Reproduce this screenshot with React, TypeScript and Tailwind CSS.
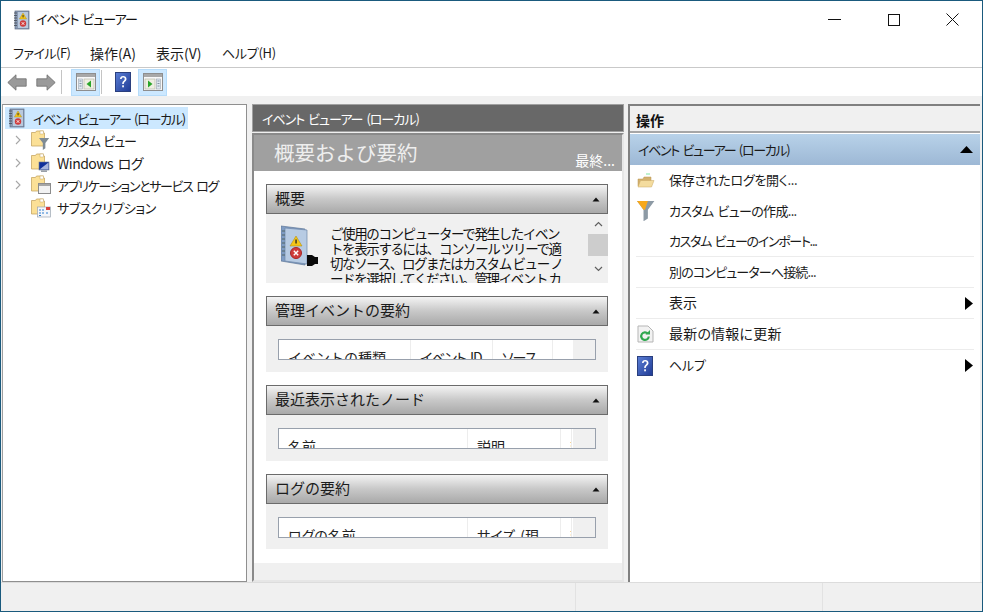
import type { ReactNode } from "react"

function LogBook({ size = 18 }: { size?: number }) {
  return (
    <svg width={size} height={size + 2} viewBox="0 0 18 20" className="shrink-0">
      <rect x="2" y="1" width="14" height="18" fill="#8a9bb5" stroke="#5c6a80" strokeWidth="0.7" />
      <rect x="5" y="2" width="10" height="16" fill="#b9c9dd" />
      <path d="M1 3h3M1 5.5h3M1 8h3M1 10.5h3M1 13h3M1 15.5h3" stroke="#4e5560" strokeWidth="0.9" />
      <path d="M10 3l3.6 6h-7.2z" fill="#f5c518" stroke="#a8860f" strokeWidth="0.4" />
      <rect x="9.6" y="5" width="0.9" height="2.4" fill="#222" />
      <circle cx="10" cy="13.5" r="3.2" fill="#cf3b3b" />
      <path d="M8.7 12.2l2.6 2.6M11.3 12.2l-2.6 2.6" stroke="#fff" strokeWidth="0.9" />
    </svg>
  )
}

function HelpBox({ id }: { id: string }) {
  return (
    <svg width="16" height="20" viewBox="0 0 16 20" className="shrink-0">
      <defs>
        <linearGradient id={id} x1="0" y1="0" x2="1" y2="1">
          <stop offset="0" stopColor="#5b7fd6" />
          <stop offset="1" stopColor="#1f3a94" />
        </linearGradient>
      </defs>
      <rect x="0.5" y="0.5" width="15" height="19" fill={`url(#${id})`} stroke="#2a3f7e" />
      <path d="M5 7c0-2 1.3-3 3.2-3S11.500 5 11.500 7c0 2.400-2.700 2.500-2.700 5H7.200c0-3.200 2.500-3.200 2.500-5 0-.9-.6-1.400-1.500-1.400S6.700 6.100 6.700 7z" fill="#fff" />
      <rect x="7.2" y="13.3" width="1.7" height="2" fill="#fff" />
    </svg>
  )
}

function PaneIcon({ side }: { side: "left" | "right" }) {
  return (
    <svg width="20" height="18" viewBox="0 0 20 18">
      <rect x="0.5" y="0.5" width="19" height="17" fill="#f8f8f8" stroke="#8e8e8e" />
      <rect x="1" y="1" width="18" height="3" fill="#a8a8a8" />
      {side === "left" ? (
        <>
          <rect x="2.5" y="6" width="4" height="10" fill="#dfe7ef" stroke="#9aa4ae" strokeWidth="0.6" />
          <path d="M3.500 8h2M3.500 10.500h2M3.500 13h2" stroke="#6a7d90" strokeWidth="0.8" />
          <rect x="8" y="6" width="10" height="10" fill="#eeeee2" stroke="#b0b0a0" strokeWidth="0.6" />
          <path d="M15 7.500v7L10.500 11z" fill="#2aa52a" />
        </>
      ) : (
        <>
          <rect x="2" y="6" width="10" height="10" fill="#eeeee2" stroke="#b0b0a0" strokeWidth="0.6" />
          <path d="M5 7.500v7L9.500 11z" fill="#2aa52a" />
          <rect x="13.5" y="6" width="4" height="10" fill="#dfe7ef" stroke="#9aa4ae" strokeWidth="0.6" />
          <path d="M14.500 8h2M14.500 10.500h2M14.500 13h2" stroke="#6a7d90" strokeWidth="0.8" />
        </>
      )}
    </svg>
  )
}

function Arrow({ flip }: { flip?: boolean }) {
  return (
    <svg width="20" height="17" viewBox="0 0 20 17" className={flip ? "-scale-x-100" : ""}>
      <path d="M0.800 8.500L9 0.800V4.800H19.200V12.200H9V16.200z" fill="#9a9a9a" stroke="#6f6f6f" strokeWidth="0.8" />
    </svg>
  )
}

function FilterShape({ orange = false }: { orange?: boolean }) {
  return (
    <>
      <path d="M0 0h12L7.500 6v6L4.500 14V6z" fill={orange ? "#8d9aa5" : "#7f8b94"} />
      {orange && <path d="M0 0h7.500L5.500 6H4.500z" fill="#f7a81b" />}
    </>
  )
}

function Folder({ children }: { children?: ReactNode }) {
  return (
    <svg width="20" height="20" viewBox="0 0 20 20" className="shrink-0">
      <path d="M0.500 2.500h4l1-1.500h7v2h1v13h-13z" fill="#fbe096" stroke="#c7a765" strokeWidth="0.8" />
      <rect x="9" y="1" width="3.500" height="3" fill="#fff" stroke="#c7a765" strokeWidth="0.5" />
      {children}
    </svg>
  )
}

function TreeRow({ label, labelClass, chevron, icon }: { label: string; labelClass: string; chevron?: boolean; icon: ReactNode }) {
  return (
    <div className="flex h-[22.5px] items-center">
      <div className="flex w-[26px] shrink-0 justify-center pr-[1px] text-[#a6a6a6]">
        {chevron && (
          <svg width="6" height="10" viewBox="0 0 6 10">
            <path d="M1 1l4 4-4 4" fill="none" stroke="currentColor" strokeWidth="1.1" />
          </svg>
        )}
      </div>
      {icon}
      <span className={`ml-[6px] whitespace-nowrap ${labelClass}`}>{label}</span>
    </div>
  )
}

function Section({ title, bodyHeight, children }: { title: string; bodyHeight: number; children: ReactNode }) {
  return (
    <section className="mb-[13px]">
      <div className="flex h-[30px] items-center justify-between border border-[#6b6b6b] bg-gradient-to-b from-[#f4f4f4] via-[#c8c8c8] to-[#a9a9a9] pl-[8px] pr-[5px] text-[15px] text-[#1c1c1c] [font-feature-settings:normal]">
        <span className="pb-[3px]">{title}</span>
        <svg width="8" height="5" viewBox="0 0 8 5" className="mr-[2px]">
          <path d="M4 0.500L7.500 4.500H0.500z" fill="#111" />
        </svg>
      </div>
      <div className="overflow-hidden bg-[#f0f0f0]" style={{ height: bodyHeight }}>
        {children}
      </div>
    </section>
  )
}

function Columns({ cols }: { cols: { label: string; width: number; labelClass?: string }[] }) {
  return (
    <div className="pl-[12px] pr-[12px] pt-[13px]">
      <div className="flex h-[21px] overflow-hidden border border-[#98a0ac] bg-white">
        {cols.map((c) => (
          <div
            key={c.label}
            className={`h-[40px] shrink-0 overflow-hidden whitespace-nowrap border-r border-[#ededed] pl-[9px] pt-[10px] text-[14px] text-[#222] ${c.labelClass ?? ""}`}
            style={{ width: c.width }}
          >
            {c.label}
          </div>
        ))}
        <div className="flex-1" />
        <div className="w-[22px] shrink-0 bg-[#f0f0f0]" />
      </div>
    </div>
  )
}

function ActionRow({
  label,
  labelClass,
  icon,
  arrow,
  line,
  h = 31,
}: {
  label: string
  labelClass?: string
  icon?: ReactNode
  arrow?: boolean
  line?: boolean
  h?: number
}) {
  return (
    <div className={`mx-[6px] flex items-center pr-[1px] ${line ? "border-b border-[#ececec]" : ""}`} style={{ height: h }}>
      <div className="flex w-[33px] shrink-0 justify-start pl-[1px]">{icon}</div>
      <span className={`flex-1 whitespace-nowrap pb-[2px] ${labelClass ?? ""}`}>{label}</span>
      {arrow && (
        <svg width="8" height="13" viewBox="0 0 8 13">
          <path d="M0 0l8 6.500-8 6.500z" fill="#000" />
        </svg>
      )}
    </div>
  )
}

export default function App() {
  return (
    <div className="flex h-[612px] w-[983px] flex-col overflow-hidden border border-[#1a5a7d] bg-[#f0f0f0] text-[14px] leading-none text-[#1a1a1a] [word-spacing:2px] [font-family:'Noto_Sans_CJK_JP',sans-serif] [font-feature-settings:'palt']">
      {/* title bar */}
      <div className="flex h-[37px] shrink-0 items-center bg-white pl-[12px]">
        <LogBook />
        <span className="ml-[5px] whitespace-nowrap pb-[2px] text-[13px] tracking-[-0.96px] text-[#111]">イベント ビューアー</span>
        <div className="ml-auto flex text-black">
          <div className="flex h-[36px] w-[59px] items-center justify-center">
            <svg width="13" height="1"><rect width="13" height="1" fill="#111" /></svg>
          </div>
          <div className="flex h-[36px] w-[59px] items-center justify-center">
            <svg width="12" height="12"><rect x="0.5" y="0.5" width="11" height="11" fill="none" stroke="#111" /></svg>
          </div>
          <div className="flex h-[36px] w-[59px] items-center justify-center pr-[1px]">
            <svg width="13" height="13"><path d="M0.500 0.500l12 12M12.500 0.500l-12 12" stroke="#111" /></svg>
          </div>
        </div>
      </div>

      {/* menu */}
      <div className="flex h-[30px] shrink-0 items-center border-b border-[#c9c9c9] bg-white pl-[12px] text-[#1a1a1a]">
        <span className="w-[77px] text-[13px] tracking-[-0.5px]">ファイル(F)</span>
        <span className="w-[66px]">操作(A)</span>
        <span className="w-[66px]">表示(V)</span>
        <span className="text-[13px] tracking-[-0.3px]">ヘルプ(H)</span>
      </div>

      {/* toolbar */}
      <div className="flex h-[28px] shrink-0 items-center bg-white pl-[6px]">
        <Arrow />
        <div className="w-[9px]" />
        <Arrow flip />
        <div className="ml-[5px] h-[24px] w-px bg-[#c4c4c4]" />
        <div className="ml-[9px] flex h-[27px] w-[29px] items-center justify-center border border-[#b6dcfa] bg-[#cce8ff]">
          <PaneIcon side="left" />
        </div>
        <div className="ml-[1px] h-[24px] w-px bg-[#c4c4c4]" />
        <div className="ml-[13px] flex items-center">
          <HelpBox id="help-toolbar" />
        </div>
        <div className="ml-[7px] flex h-[27px] w-[29px] items-center justify-center border border-[#b6dcfa] bg-[#cce8ff]">
          <PaneIcon side="right" />
        </div>
      </div>

      {/* panels */}
      <div className="flex min-h-0 flex-1 pl-[1px] pr-[2px] pt-[8px]">
        {/* tree */}
        <div className="h-[478px] w-[245px] shrink-0 border border-[#8f8f8f] border-l-[#a0a0a0] bg-white pl-[2px] pt-[2px]">
          <div className="flex h-[22px] w-[183px] items-center bg-[#cce8ff] pl-[3px]">
            <LogBook />
            <span className="ml-[7px] whitespace-nowrap text-[13px] tracking-[-1.3px]">イベント ビューアー (ローカル)</span>
          </div>
          <TreeRow
            label="カスタム ビュー"
            labelClass="text-[13px] tracking-[-1.15px]"
            chevron
            icon={
              <Folder>
                <g transform="translate(8 8) scale(0.85)">
                  <FilterShape />
                </g>
              </Folder>
            }
          />
          <TreeRow
            label="Windows ログ"
            labelClass="tracking-[-0.5px]"
            chevron
            icon={
              <Folder>
                <rect x="8" y="9" width="10" height="8" fill="#10309a" stroke="#6c7c90" strokeWidth="0.6" />
                <path d="M8.500 16.500l9-7v7z" fill="#e8eef8" opacity="0.7" />
                <rect x="10" y="17.3" width="6" height="1.7" fill="#9aa0a8" />
              </Folder>
            }
          />
          <TreeRow
            label="アプリケーションとサービス ログ"
            labelClass="text-[13px] tracking-[-1.32px]"
            chevron
            icon={
              <Folder>
                <rect x="7.5" y="8.5" width="12" height="10" fill="#f2f2f2" stroke="#8c8c8c" />
                <rect x="8" y="9" width="11" height="2" fill="#a6a6a6" />
              </Folder>
            }
          />
          <TreeRow
            label="サブスクリプション"
            labelClass="text-[13px] tracking-[-0.45px]"
            icon={
              <Folder>
                <rect x="6.5" y="9" width="13" height="10" fill="#f4f6fa" stroke="#9aa4b0" strokeWidth="0.7" />
                <rect x="15" y="9" width="4" height="3" fill="#d9413a" />
                <path d="M8 12h2M11 12h2M8 15h2M11 15h2M15 15h2M8 17.500h2" stroke="#2f7fd0" />
              </Folder>
            }
          />
        </div>

        {/* middle */}
        <div className="ml-[5px] h-[478px] w-[372px] shrink-0">
          <div className="flex h-[28px] items-center border border-[#a0a0a0] bg-[#686868] pl-[9px] text-[13px] tracking-[-1px] text-white">
            イベント ビューアー (ローカル)
          </div>
          <div className="mt-[1px] flex h-[449px] flex-col border-2 border-[#8a8a8a] border-r-[#e6e6e6] border-b-[#e6e6e6]">
            <div className="flex h-[36px] shrink-0 items-end justify-between bg-[#a0a0a0] pb-[4px] pl-[20px] pr-[7px] text-white [font-feature-settings:normal]">
              <span className="mb-[5px] text-[20.5px] text-[#eeeeee]">概要および要約</span>
              <span className="text-[14px] [font-feature-settings:'palt']">最終...</span>
            </div>
            <div className="h-[392px] shrink-0 bg-white pl-[12px] pr-[14px] pt-[13px]">
              <Section title="概要" bodyHeight={69}>
                <div className="flex">
                  <div className="w-[63px] shrink-0 pl-[15px] pt-[11px]">
                    <svg width="37" height="42" viewBox="0 0 37 42">
                      <path d="M0 1l24 3v36L0 36z" fill="#7f9cc4" stroke="#5d7596" strokeWidth="0.7" />
                      <path d="M4 3l22 2v34L4 36z" fill="#b7cbe3" stroke="#6e87a8" strokeWidth="0.7" />
                      <path d="M1 6h3M1 10h3M1 14h3M1 18h3M1 22h3M1 26h3M1 30h3" stroke="#556666" strokeWidth="1" />
                      <path d="M15 11l6 10H9z" fill="#f4c518" stroke="#a8860f" strokeWidth="0.5" />
                      <rect x="14.4" y="14.5" width="1.3" height="4" fill="#222" />
                      <circle cx="15" cy="28" r="5.5" fill="#cf3b3b" stroke="#a82626" />
                      <path d="M12.800 25.800l4.400 4.400M17.200 25.800l-4.400 4.400" stroke="#fff" strokeWidth="1.4" />
                      <path d="M26 30h5l3 2h3v7h-3l-3 2h-5z" fill="#0a0a0a" />
                    </svg>
                  </div>
                  <p className="h-[69px] w-[259px] shrink-0 overflow-hidden whitespace-nowrap pl-[1px] pt-[12px] text-[13.5px] leading-[15px] tracking-[-1.4px] text-[#111] [word-spacing:0px] [font-feature-settings:normal]">
                    <span className="block">ご使用のコンピューターで発生したイベン</span>
                    <span className="block">トを表示するには、コンソール ツリーで適</span>
                    <span className="block">切なソース、ログまたはカスタム ビュー ノ</span>
                    <span className="block">ードを選択してください。管理イベント カ</span>
                  </p>
                  <div className="flex w-[20px] shrink-0 flex-col items-center">
                    <div className="flex h-[20px] items-center">
                      <svg width="9" height="6" viewBox="0 0 9 6"><path d="M1 5l3.500-3.500L8 5" fill="none" stroke="#606060" strokeWidth="1.2" /></svg>
                    </div>
                    <div className="h-[22px] w-full bg-[#cdcdcd]" />
                    <div className="flex h-[26px] items-center">
                      <svg width="9" height="6" viewBox="0 0 9 6"><path d="M1 1l3.500 3.500L8 1" fill="none" stroke="#606060" strokeWidth="1.2" /></svg>
                    </div>
                  </div>
                </div>
              </Section>
              <Section title="管理イベントの要約" bodyHeight={46}>
                <Columns
                  cols={[
                    { label: "イベントの種類", width: 132, labelClass: "[font-feature-settings:normal]" },
                    { label: "イベント ID", width: 82, labelClass: "tracking-[-1px]" },
                    { label: "ソース", width: 60, labelClass: "tracking-[-1px]" },
                  ]}
                />
              </Section>
              <Section title="最近表示されたノード" bodyHeight={46}>
                <Columns cols={[{ label: "名前", width: 189 }, { label: "説明", width: 93 }, { label: "変", width: 11 }]} />
              </Section>
              <Section title="ログの要約" bodyHeight={45}>
                <Columns cols={[{ label: "ログの名前", width: 189 }, { label: "サイズ (現", width: 93 }, { label: "変", width: 11 }]} />
              </Section>
            </div>
            <div className="flex-1 bg-[#f0f0f0]" />
          </div>
        </div>

        {/* actions */}
        <div className="ml-[4px] flex h-[478px] flex-1 flex-col border-l-2 border-t-2 border-[#808080] bg-white">
          <div className="flex h-[27px] shrink-0 items-center border-b-2 border-[#a6a6a6] bg-[#f0f0f0] pl-[6px] pt-[2px] font-bold text-[#111]">
            操作
          </div>
          <div className="mt-px flex h-[31px] shrink-0 items-center justify-between bg-gradient-to-b from-[#b8d2e9] to-[#9db8d5] pl-[8px] pr-[7px] text-[#1a1a1a]">
            <span className="text-[13px] tracking-[-1.32px]">イベント ビューアー (ローカル)</span>
            <svg width="13" height="7" viewBox="0 0 13 7"><path d="M6.500 0l6.500 7H0z" fill="#000" /></svg>
          </div>
          <ActionRow
            label="保存されたログを開く..."
            labelClass="text-[13px] tracking-[-0.3px]"
            icon={
              <svg width="18" height="18" viewBox="0 0 18 18">
                <path d="M9 2h4" stroke="#5fe08a" strokeWidth="0.8" />
                <path d="M1 7h5l1-2h7v9H1z" fill="#d3b16f" stroke="#b89450" strokeWidth="0.5" />
                <path d="M1 15L3.500 8.500H17L14.500 15z" fill="#f4dc9e" stroke="#c9a864" strokeWidth="0.5" />
              </svg>
            }
          />
          <ActionRow
            label="カスタム ビューの作成..."
            labelClass="text-[13px] tracking-[-0.7px]"
            h={30}
            icon={
              <svg width="18" height="20" viewBox="0 0 18 20">
                <g transform="scale(1.45)">
                  <FilterShape orange />
                </g>
              </svg>
            }
          />
          <ActionRow label="カスタム ビューのインポート..." labelClass="text-[13px] tracking-[-1.3px]" line />
          <ActionRow label="別のコンピューターへ接続..." labelClass="text-[13px] tracking-[-0.85px]" line />
          <ActionRow label="表示" arrow line />
          <ActionRow
            label="最新の情報に更新"
            labelClass="tracking-[0.2px]"
            line
            icon={
              <svg width="17" height="18" viewBox="0 0 17 18">
                <path d="M1 1h10l5 5v11H1z" fill="#f2f2f2" stroke="#b5b5b5" />
                <path d="M11.800 11.500a3.800 3.800 0 1 1-1-3" fill="none" stroke="#2fa84f" strokeWidth="2.200" />
                <path d="M13 5v4.500H8.500z" fill="#2fa84f" />
              </svg>
            }
          />
          <ActionRow label="ヘルプ" labelClass="text-[13px] tracking-[-0.2px]" arrow icon={<HelpBox id="help-actions" />} />
        </div>
      </div>

      {/* status bar */}
      <div className="flex h-[29px] shrink-0 border-t border-[#dcdcdc]">
        <div className="w-[575px] border-r border-[#e2e2e2]" />
        <div className="w-[247px] border-r border-[#e2e2e2]" />
      </div>
    </div>
  )
}
